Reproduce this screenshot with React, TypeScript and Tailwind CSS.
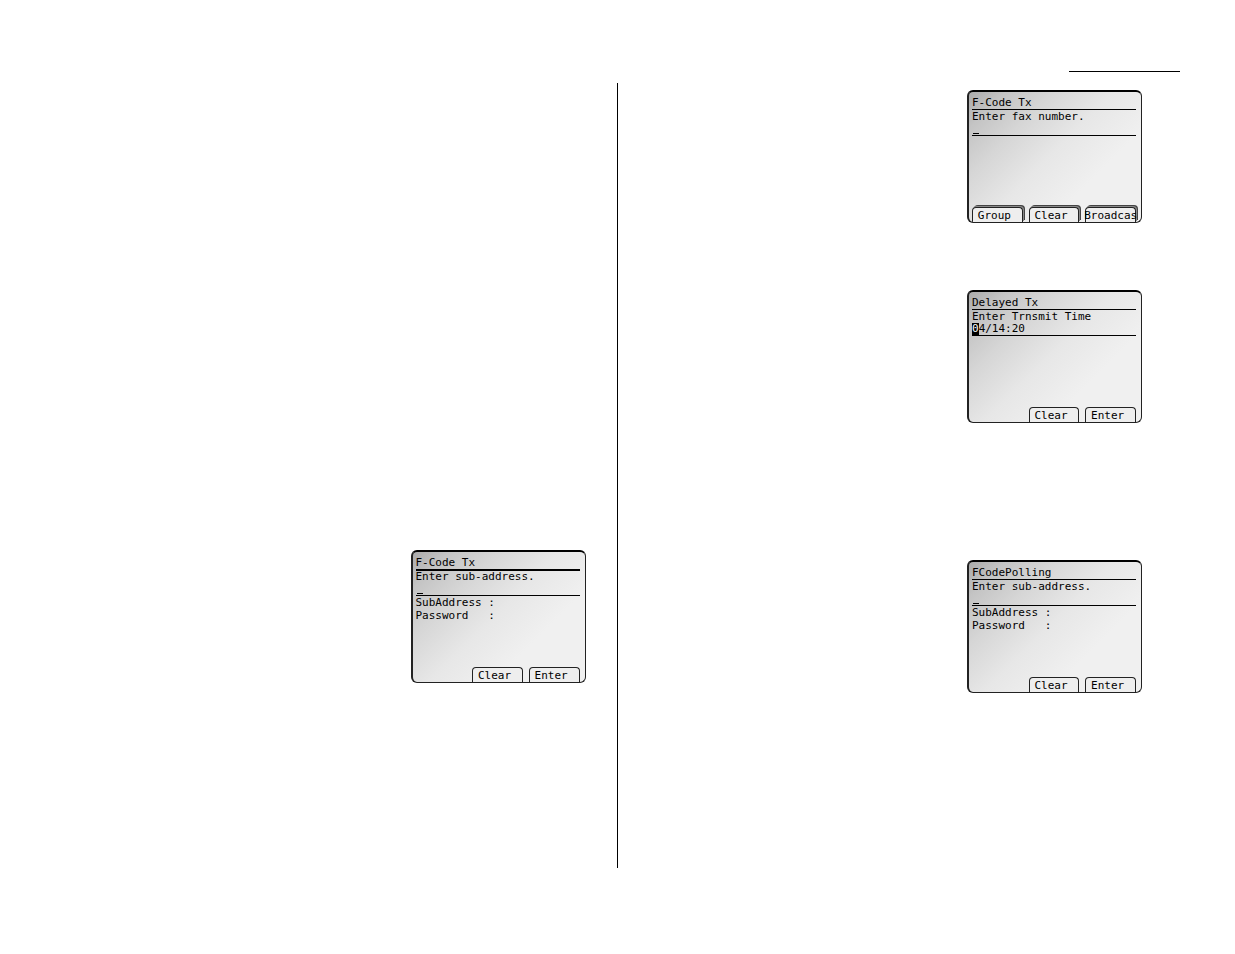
import React from 'react';

interface SoftKey {
    label: string;
    raised?: boolean;
}

interface ScreenProps {
    id: string;
    title: string;
    prompt: string;
    value?: string;
    thickRule?: boolean;
    fields?: string[];
    keys: (SoftKey | null)[];
}

const fCodeTx: ScreenProps = {
    id: 'fcode-sub',
    title: 'F-Code Tx',
    prompt: 'Enter sub-address.',
    thickRule: true,
    fields: ['SubAddress', 'Password'],
    keys: [null, { label: 'Clear' }, { label: 'Enter' }],
};

const faxNumber: ScreenProps = {
    id: 'fcode-fax',
    title: 'F-Code Tx',
    prompt: 'Enter fax number.',
    keys: [
        { label: 'Group', raised: true },
        { label: 'Clear', raised: true },
        { label: 'Broadcas', raised: true },
    ],
};

const delayedTx: ScreenProps = {
    id: 'delayed',
    title: 'Delayed Tx',
    prompt: 'Enter Trnsmit Time',
    value: '04/14:20',
    keys: [null, { label: 'Clear' }, { label: 'Enter' }],
};

const polling: ScreenProps = {
    id: 'polling',
    title: 'FCodePolling',
    prompt: 'Enter sub-address.',
    fields: ['SubAddress', 'Password'],
    keys: [null, { label: 'Clear' }, { label: 'Enter' }],
};

const Key: React.FC<SoftKey> = ({ label, raised }) => (
    <button
        type="button"
        className={`flex h-[15px] min-w-0 items-center justify-center whitespace-nowrap rounded-t-sm border border-b-0 border-[#222] bg-[#eeeeee] ${raised
                ? 'shadow-[1px_-1px_0_#888,2px_-2px_0_#444]'
                : ''
            } ${label.length < 8 ? 'pr-1.5' : ''}`}
    >
        {label}
    </button>
);

const Screen: React.FC<ScreenProps> = ({ id, title, prompt, value, thickRule, fields, keys }) => (
    <section className="flex h-[133px] w-[175px] flex-col overflow-hidden rounded-md border border-t-2 border-l-2 border-[#222] border-t-black bg-[linear-gradient(135deg,#aaaaaa_0%,#c4c4c4_12%,#d6d6d6_28%,#e7e7e7_48%,#f0f0f0_70%)] pr-[5px] pl-[3px] font-['DejaVu_Sans_Mono',monospace] text-[11px] leading-[13px] text-black">
        <h2 className={`shrink-0 border-black pt-1 ${thickRule ? 'border-b-2' : 'border-b'}`}>{title}</h2>
        <label htmlFor={id} className={`shrink-0 whitespace-nowrap leading-3 ${thickRule ? '' : 'pt-px'}`}>{prompt}</label>
        <div className="relative flex shrink-0 border-b border-black leading-3">
            {value ? (
                <span className="bg-black text-white">{value[0]}</span>
            ) : (
                <span aria-hidden className="absolute bottom-px left-px h-px w-1.5 bg-black" />
            )}
            <input id={id} defaultValue={value?.slice(1)} className="h-3 min-w-0 flex-1 bg-transparent outline-none" />
        </div>
        <div className="shrink-0">
            {fields?.map((field) => (
                <p key={field} className="whitespace-pre">{field.padEnd(11)}:</p>
            ))}
        </div>
        <div className="mt-auto grid grid-cols-3 gap-1.5">
            {keys.map((key, i) => (key ? <Key key={key.label} {...key} /> : <span key={i} />))}
        </div>
    </section>
);

const App: React.FC = () => (
    <div className="min-h-screen bg-white pt-[71px]">
        <header className="flex justify-end pr-[55px]">
            <hr className="w-[111px] border-black" />
        </header>
        <main className="mt-[11px] grid grid-cols-2">
            <div className="flex justify-end border-r border-black pt-[467px] pr-[31px] pb-[185px]">
                <Screen {...fCodeTx} />
            </div>
            <div className="flex flex-col items-end pt-[7px] pr-[93px]">
                <Screen {...faxNumber} />
                <div className="mt-[67px]">
                    <Screen {...delayedTx} />
                </div>
                <div className="mt-[137px]">
                    <Screen {...polling} />
                </div>
            </div>
        </main>
    </div>
);

export default App;
